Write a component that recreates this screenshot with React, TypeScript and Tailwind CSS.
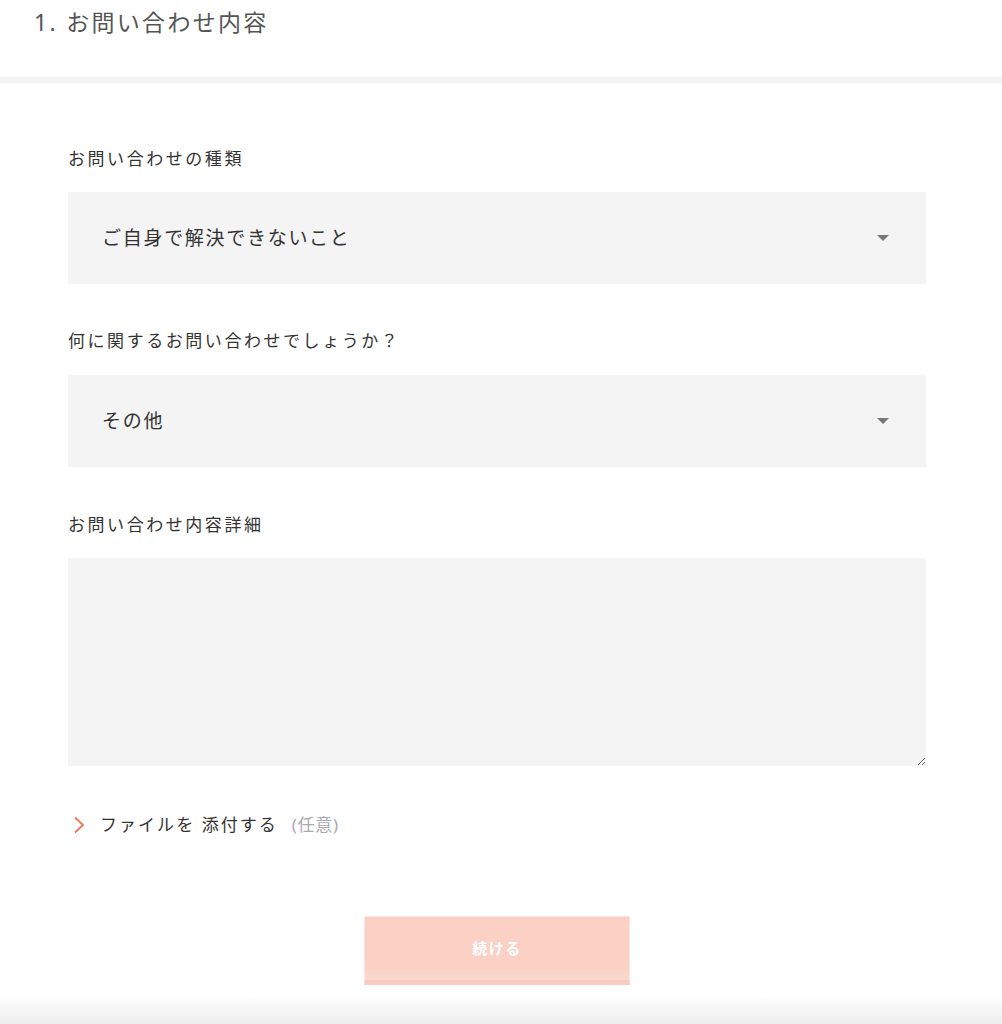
import React from "react";

const font = { fontFamily: '"Noto Sans", "Noto Sans CJK JP", sans-serif' };

function Caret() {
  return (
    <svg width="12" height="6" viewBox="0 0 12 6" className="shrink-0">
      <path d="M0 0 L12 0 L6 6 Z" fill="#777" />
    </svg>
  );
}

function Select({ value }: { value: string }) {
  return (
    <div className="flex h-[92px] items-center justify-between bg-[#f4f4f4] pl-[34px] pr-[37px]">
      <span className="text-[19px] tracking-[0.09em] text-[#333]">{value}</span>
      <Caret />
    </div>
  );
}

function Label({ children }: { children: React.ReactNode }) {
  return <div className="text-[17px] leading-[24px] tracking-[0.15em] text-[#333]">{children}</div>;
}

export default function App() {
  return (
    <div className="relative min-h-[1024px] bg-white" style={font}>
      <div className="h-[77px] pl-[34px] pt-[5px]">
        <h1 className="text-[23px] leading-[34px] tracking-[0.1em] text-[#555]">1. お問い合わせ内容</h1>
      </div>
      <div className="h-[6px] bg-[#f3f3f3]" />
      <div className="pl-[68px] pr-[76px] pt-[64px]">
        <Label>お問い合わせの種類</Label>
        <div className="mt-[21px]">
          <Select value="ご自身で解決できないこと" />
        </div>
        <div className="mt-[45px]">
          <Label>何に関するお問い合わせでしょうか？</Label>
        </div>
        <div className="mt-[22px]">
          <Select value="その他" />
        </div>
        <div className="mt-[46px]">
          <Label>お問い合わせ内容詳細</Label>
        </div>
        <textarea className="mt-[21px] block h-[208px] w-full bg-[#f4f4f4] p-4 text-[16px] outline-none" />
        <div className="mt-[46px] flex items-center">
          <svg width="12" height="18" viewBox="0 0 12 18" className="ml-[5px]">
            <polyline points="2,1.5 10,9 2,16.5" fill="none" stroke="#ef7457" strokeWidth="1.8" />
          </svg>
          <span className="ml-[15px] text-[17px] tracking-[0.12em] text-[#333]">ファイルを 添付する</span>
          <span className="ml-[14px] text-[17px] tracking-[0.04em] text-[#aaa]">(任意)</span>
        </div>
        <div className="mt-[78px] flex justify-center">
          <button className="flex h-[69px] w-[266px] items-center justify-center border border-[#fde3dc] border-b-[5px] border-b-[#f8bdb1] bg-[#fbd1c5] text-[15px] font-bold tracking-[0.1em] text-white">
            続ける
          </button>
        </div>
      </div>
      <div className="pointer-events-none absolute bottom-0 left-0 right-0 h-[56px] bg-gradient-to-b from-white/0 via-white/40 to-[#ececec]" />
    </div>
  );
}
